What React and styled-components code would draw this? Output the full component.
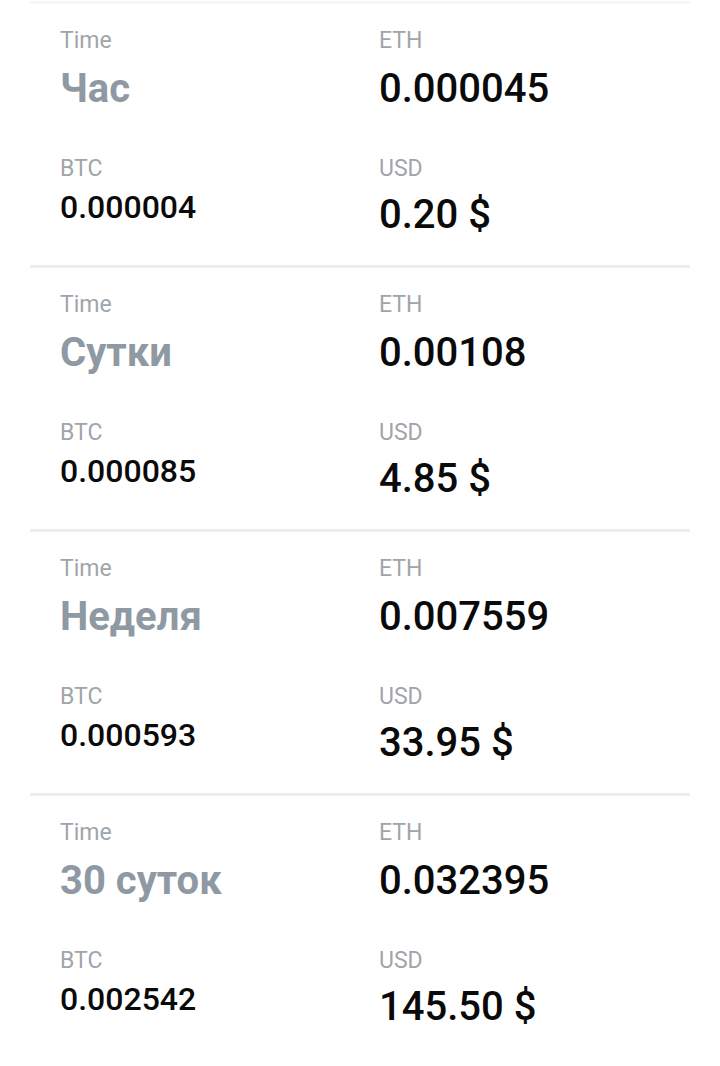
import React from "react";
import styled, { createGlobalStyle } from "styled-components";

const GlobalStyle = createGlobalStyle`
  html, body {
    margin: 0;
    padding: 0;
    background: #ffffff;
  }
  body {
    font-family: Roboto, "Noto Sans", "Liberation Sans", sans-serif;
    -webkit-font-smoothing: antialiased;
  }
`;

const List = styled.div`
  width: 720px;
  padding: 1px 30px 0 30px;
  box-sizing: border-box;
  display: flex;
  flex-direction: column;
`;

const Card = styled.div`
  box-sizing: border-box;
  border-top: 3px solid ${(p) => (p.$faint ? "#f5f6f6" : "#ecedec")};
  height: 264px;
  padding: 24px 0 0 30px;
  display: grid;
  grid-template-columns: 319px 1fr;
  grid-template-rows: auto auto;
  row-gap: 43px;
  align-content: start;
`;

const Cell = styled.div`
  display: flex;
  flex-direction: column;
`;

const Label = styled.div`
  font-size: 23px;
  line-height: 26px;
  font-weight: 400;
  color: #a0a5aa;
`;

const Value = styled.div`
  font-size: ${(p) => p.$size}px;
  line-height: ${(p) => p.$lh}px;
  margin-top: ${(p) => p.$gap}px;
  font-weight: ${(p) => (p.$bold ? 700 : 500)};
  color: ${(p) => (p.$muted ? "#8f99a3" : "#0a0a0a")};
  white-space: nowrap;
`;

const rows = [
  { period: "Час", eth: "0.000045", btc: "0.000004", usd: "0.20 $" },
  { period: "Сутки", eth: "0.00108", btc: "0.000085", usd: "4.85 $" },
  { period: "Неделя", eth: "0.007559", btc: "0.000593", usd: "33.95 $" },
  { period: "30 суток", eth: "0.032395", btc: "0.002542", usd: "145.50 $" },
];

function ProfitCard({ row, first }) {
  return (
    <Card $faint={first}>
      <Cell>
        <Label>Time</Label>
        <Value $size={40} $lh={48} $gap={11} $bold $muted>
          {row.period}
        </Value>
      </Cell>
      <Cell>
        <Label>ETH</Label>
        <Value $size={40} $lh={48} $gap={11}>
          {row.eth}
        </Value>
      </Cell>
      <Cell>
        <Label>BTC</Label>
        <Value $size={32} $lh={38} $gap={6}>
          {row.btc}
        </Value>
      </Cell>
      <Cell>
        <Label>USD</Label>
        <Value $size={40} $lh={48} $gap={9}>
          {row.usd}
        </Value>
      </Cell>
    </Card>
  );
}

export default function App() {
  return (
    <>
      <GlobalStyle />
      <List>
        {rows.map((row, i) => (
          <ProfitCard key={row.period} row={row} first={i === 0} />
        ))}
      </List>
    </>
  );
}
